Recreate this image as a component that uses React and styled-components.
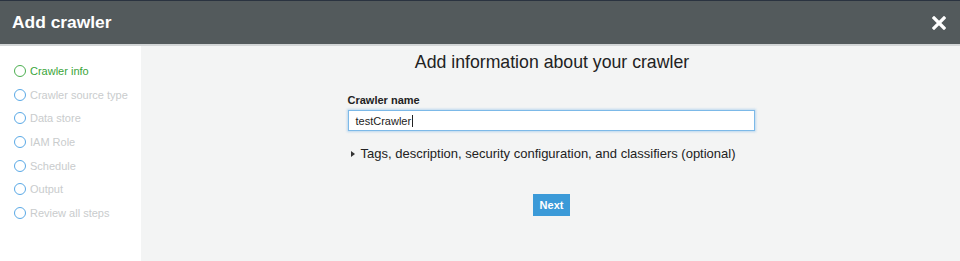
import React from "react";
import styled, { createGlobalStyle } from "styled-components";

const Global = createGlobalStyle`
  html, body { margin: 0; padding: 0; background: #fff; }
  body { font-family: "Liberation Sans", Arial, sans-serif; }
`;

const Page = styled.div`
  width: 960px;
  height: 261px;
  display: flex;
  flex-direction: column;
  overflow: hidden;
`;

const Header = styled.header`
  height: 43px;
  background: #535a5c;
  border-top: 1px solid #2a3340;
  border-bottom: 2px solid #d3d6d7;
  display: flex;
  align-items: center;
  justify-content: space-between;
  padding: 0 12px;
  flex-shrink: 0;
`;

const Title = styled.h1`
  margin: 0;
  color: #fff;
  font-size: 17.4px;
  font-weight: bold;
`;

const Close = styled.button`
  border: none;
  background: none;
  padding: 0;
  margin-right: 2px;
  display: flex;
  cursor: pointer;
`;

const Body = styled.div`
  flex: 1;
  display: flex;
`;

const Sidebar = styled.nav`
  width: 141px;
  background: #fff;
  padding-top: 17px;
  display: flex;
  flex-direction: column;
  gap: 7.7px;
`;

const Step = styled.div`
  display: flex;
  align-items: center;
  gap: 4px;
  padding-left: 14px;
  height: 16px;
  font-size: 11px;
  color: ${p => (p.$active ? "#3aa53a" : "#c9cccd")};
`;

const Circle = styled.span`
  width: 12px;
  height: 12px;
  box-sizing: border-box;
  border-radius: 50%;
  border: 1.5px solid ${p => (p.$active ? "#4caf50" : "#5aa9e6")};
  flex-shrink: 0;
`;

const Main = styled.main`
  flex: 1;
  background: #f3f4f4;
  display: flex;
  flex-direction: column;
  align-items: center;
  padding-top: 6px;
`;

const Heading = styled.h2`
  margin: 0;
  font-size: 17.7px;
  font-weight: normal;
  color: #222;
  line-height: 21px;
  margin-left: 3px;
`;

const Form = styled.div`
  width: 407px;
  margin-top: 21px;
  margin-left: 1px;
  display: flex;
  flex-direction: column;
`;

const Label = styled.label`
  font-size: 11px;
  font-weight: bold;
  color: #222;
  line-height: 13px;
`;

const Input = styled.div`
  margin-top: 3px;
  height: 21px;
  box-sizing: border-box;
  border: 1px solid #7cb9e8;
  box-shadow: 0 0 2px 1px rgba(124, 185, 232, 0.45);
  background: #fff;
  display: flex;
  align-items: center;
  padding-left: 7px;
  font-size: 11px;
  color: #222;
`;

const Caret = styled.span`
  display: inline-block;
  width: 1px;
  height: 12px;
  background: #222;
  margin-left: 0.5px;
`;

const Toggle = styled.div`
  margin-top: 15px;
  display: flex;
  align-items: center;
  gap: 6px;
  padding-left: 3px;
  font-size: 13px;
  color: #222;
`;

const Tri = styled.span`
  width: 0;
  height: 0;
  border-top: 3.5px solid transparent;
  border-bottom: 3.5px solid transparent;
  border-left: 4px solid #333;
`;

const NextBtn = styled.button`
  margin-top: 33px;
  margin-left: 2px;
  width: 37px;
  height: 22px;
  border: none;
  background: #3b9ad8;
  color: #fff;
  font-family: inherit;
  font-size: 11px;
  font-weight: bold;
  padding: 0;
`;

const steps = [
  "Crawler info",
  "Crawler source type",
  "Data store",
  "IAM Role",
  "Schedule",
  "Output",
  "Review all steps",
];

export default function App() {
  return (
    <>
      <Global />
      <Page>
        <Header>
          <Title>Add crawler</Title>
          <Close aria-label="close">
            <svg width="14" height="14" viewBox="0 0 14 14">
              <path d="M2 2 L12 12 M12 2 L2 12" stroke="#fff" strokeWidth="3.2" strokeLinecap="square" />
            </svg>
          </Close>
        </Header>
        <Body>
          <Sidebar>
            {steps.map((s, i) => (
              <Step key={s} $active={i === 0}>
                <Circle $active={i === 0} />
                {s}
              </Step>
            ))}
          </Sidebar>
          <Main>
            <Heading>Add information about your crawler</Heading>
            <Form>
              <Label>Crawler name</Label>
              <Input>
                testCrawler<Caret />
              </Input>
              <Toggle>
                <Tri />
                Tags, description, security configuration, and classifiers (optional)
              </Toggle>
            </Form>
            <NextBtn>Next</NextBtn>
          </Main>
        </Body>
      </Page>
    </>
  );
}
